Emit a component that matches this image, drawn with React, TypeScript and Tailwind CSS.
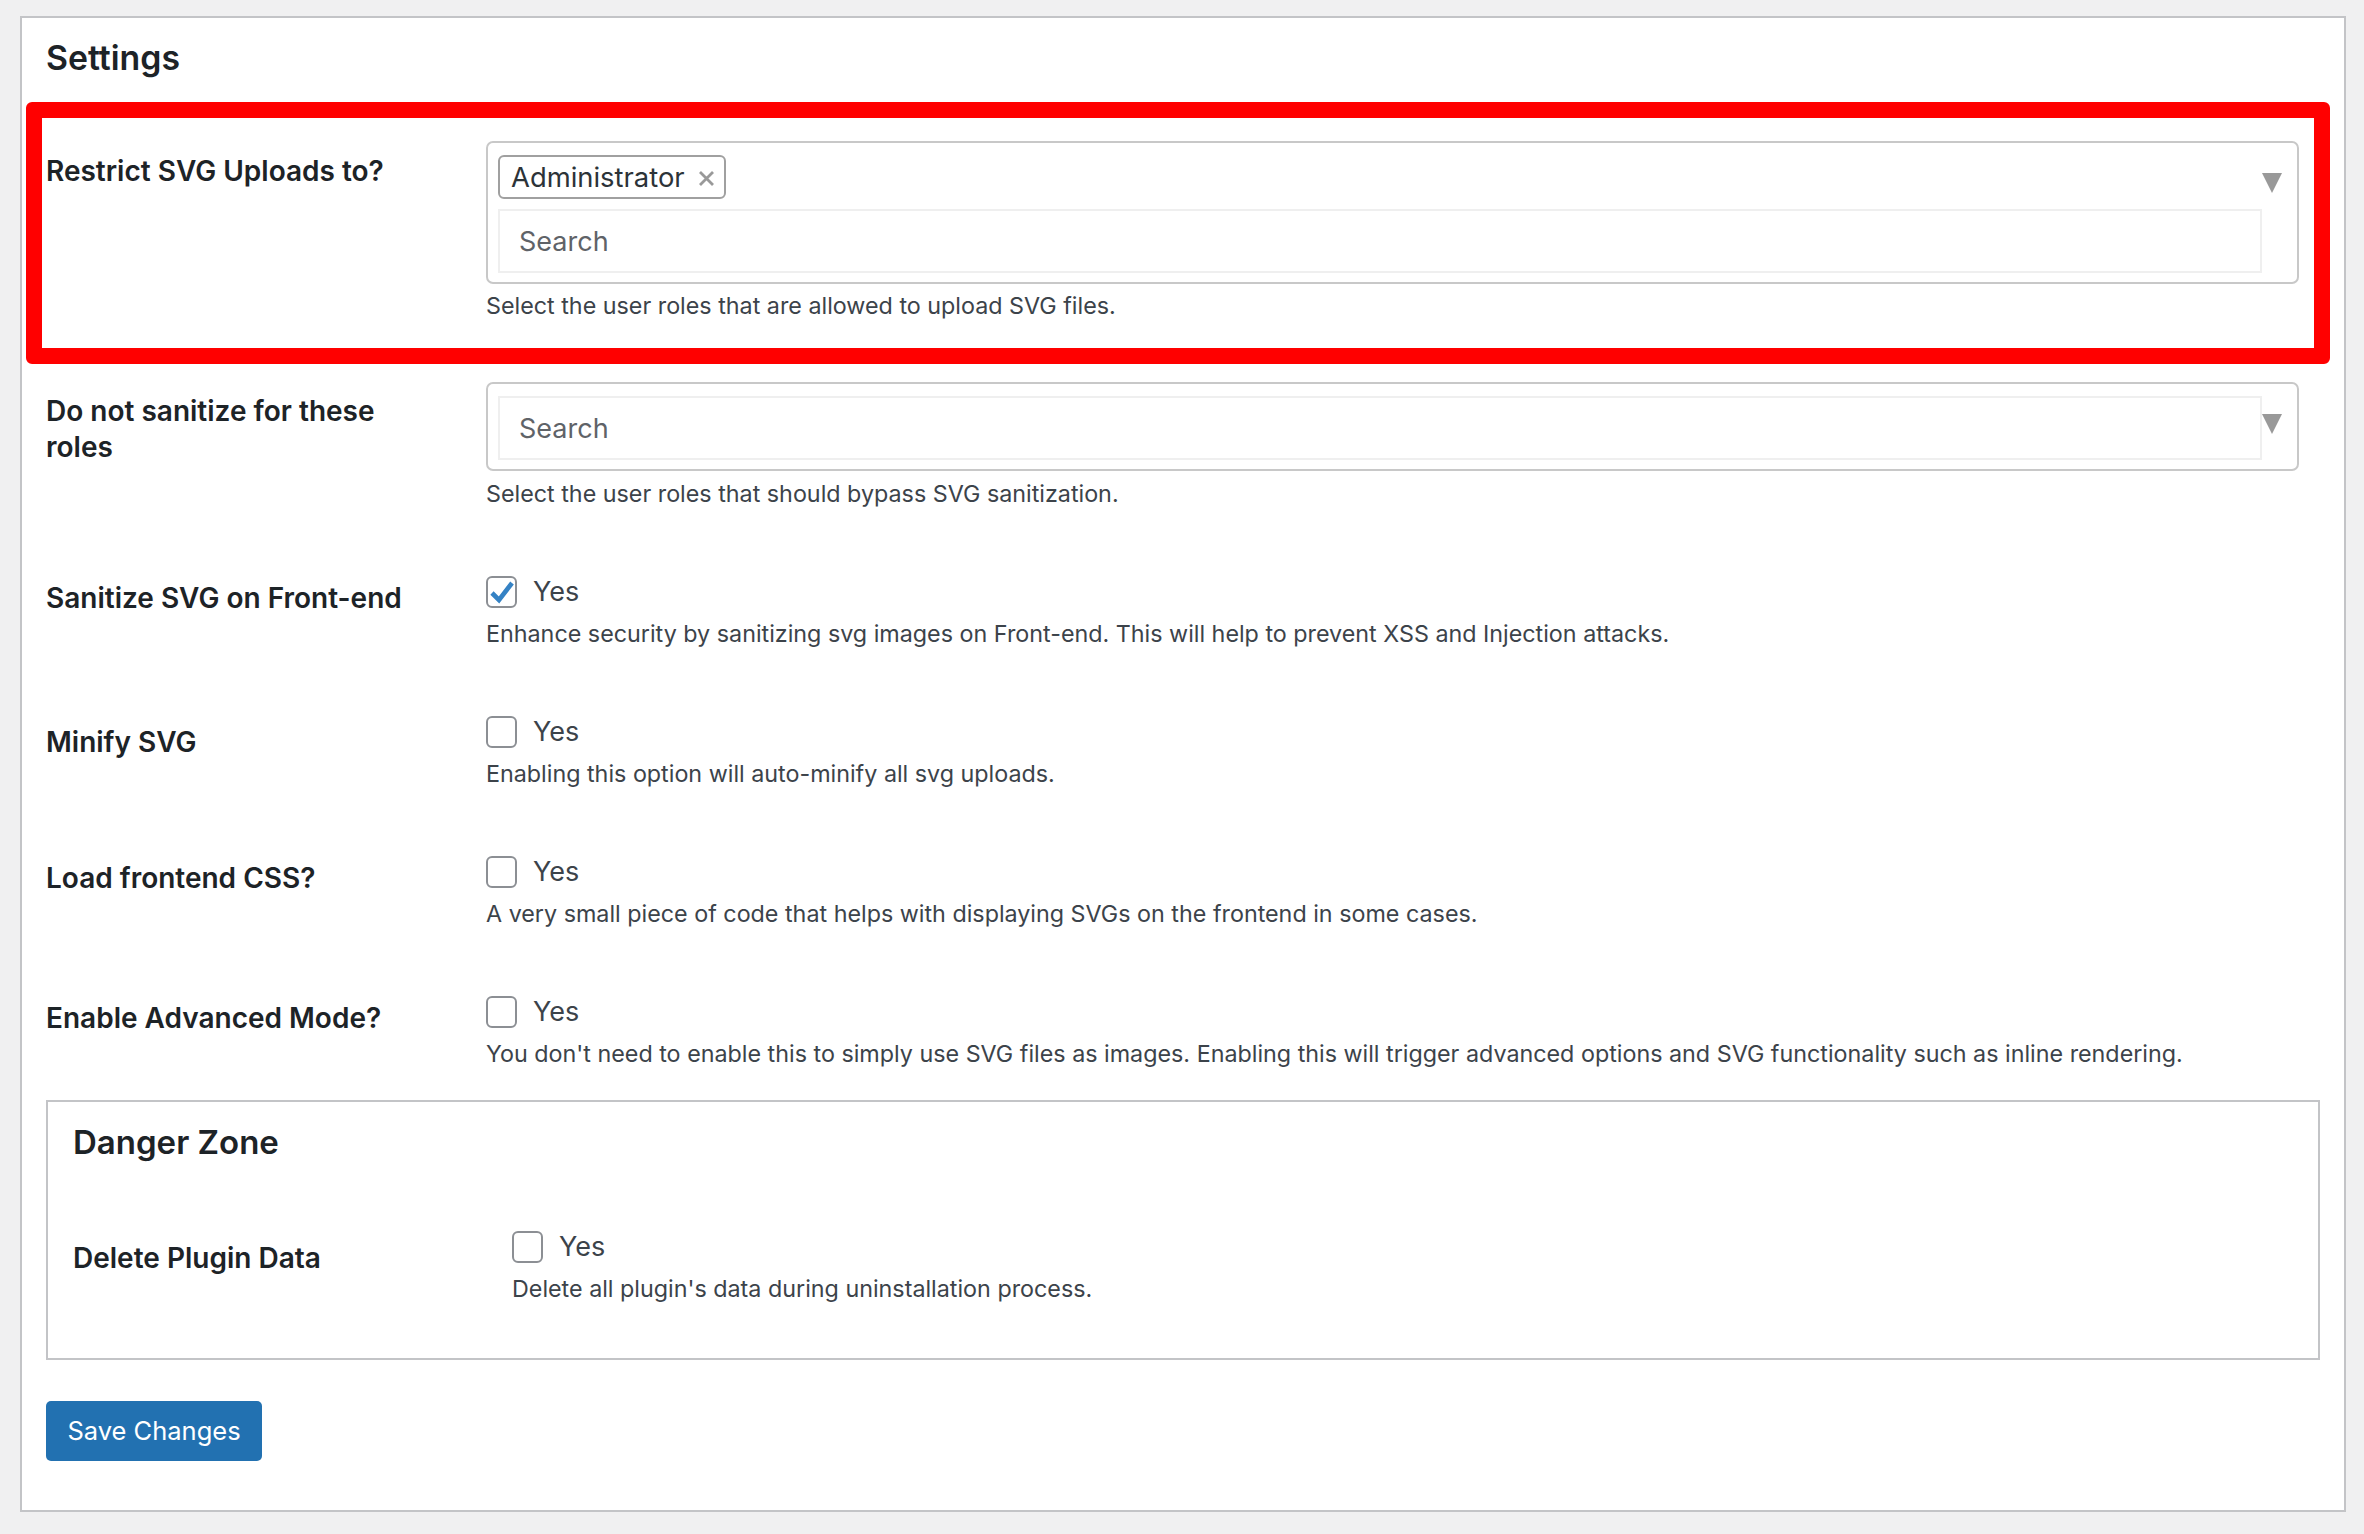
const font = 'font-["Inter","Liberation_Sans",sans-serif]';

function Hint({ children }: { children: React.ReactNode }) {
  return <p className="whitespace-nowrap text-[23.3px] leading-[30px] text-[#3c434a]">{children}</p>;
}

function RoleSearch({ children }: { children?: React.ReactNode }) {
  return (
    <div className="relative rounded-[7px] border-2 border-[#c8c8c8] px-[10px] pt-[12px] pb-[9px]">
      {children}
      <div className="mr-[25px] flex h-[64px] items-center border-2 border-[#efefef] pl-[19px] pt-[2px] text-[27px] text-[#5f6368]">Search</div>
      <svg className="absolute right-[15px] top-[30px] h-[20px] w-[20px]" viewBox="0 0 20 20">
        <path d="M0 0H20L10 20Z" fill="#999" />
      </svg>
    </div>
  );
}

function Check({ label, checked, hint }: { label: string; checked?: boolean; hint: string }) {
  return (
    <div>
      <div className="flex h-[32px] items-center">
        <span className="flex h-[32px] w-[31px] items-center justify-center rounded-[6px] border-2 border-[#8c8f94] bg-white">
          {checked && (
            <svg className="h-[32px] w-[31px] shrink-0" viewBox="0 0 31 32" fill="none">
              <path d="M6 17L13 24L26 7" stroke="#3582c4" strokeWidth="4.6" />
            </svg>
          )}
        </span>
        <span className="ml-[16px] text-[27px] text-[#3c434a]">{label}</span>
      </div>
      <div className="mt-[11px]"><Hint>{hint}</Hint></div>
    </div>
  );
}

function Label({ children, width = 'w-[440px]' }: { children: React.ReactNode; width?: string }) {
  return <div className={`${width} pr-[60px] text-[28px] font-semibold leading-[36px] text-[#1d2327]`}>{children}</div>;
}

const checks = [
  { label: 'Sanitize SVG on Front-end', checked: true, top: 'mt-[67px]', pad: 'pt-[4px]', hint: 'Enhance security by sanitizing svg images on Front-end. This will help to prevent XSS and Injection attacks.' },
  { label: 'Minify SVG', top: 'mt-[67px]', pad: 'pt-[8px]', hint: 'Enabling this option will auto-minify all svg uploads.' },
  { label: 'Load frontend CSS?', top: 'mt-[67px]', pad: 'pt-[4px]', hint: 'A very small piece of code that helps with displaying SVGs on the frontend in some cases.' },
  { label: 'Enable Advanced Mode?', top: 'mt-[67px]', pad: 'pt-[4px]', hint: "You don't need to enable this to simply use SVG files as images. Enabling this will trigger advanced options and SVG functionality such as inline rendering." },
];

export default function App() {
  return (
    <div className={`${font} min-h-[1534px] bg-[#f0f0f1] pl-[20px] pr-[18px] pt-[16px]`}>
      <div className="h-[1496px] border-2 border-[#c3c4c7] bg-white px-[24px]">
        <h2 className="pt-[20px] pb-[1px] text-[33.8px] font-semibold leading-[40px] text-[#1d2327]">Settings</h2>

        {/* red annotation round the first row */}
        <div className="-ml-[20px] -mr-[10px] mt-[23px] flex h-[262px] rounded-[6px] border-[16px] border-[#ff0000] pl-[4px] pr-[15px] pt-[23px]">
          <div className="pt-[12px]"><Label>Restrict SVG Uploads to?</Label></div>
          <div className="min-w-0 flex-1">
            <RoleSearch>
              <div className="mb-[10px] flex h-[44px] w-[228px] items-center justify-between rounded-[6px] border-2 border-[#a0a0a0] pl-[11px] pr-[10px] pt-[2px] text-[27.4px] text-[#2c3338]">
                Administrator
                <svg className="h-[15px] w-[15px]" viewBox="0 0 15 15"><path d="M1 1L14 14M14 1L1 14" stroke="#999" strokeWidth="2.8" /></svg>
              </div>
            </RoleSearch>
            <div className="mt-[7px]"><Hint>Select the user roles that are allowed to upload SVG files.</Hint></div>
          </div>
        </div>

        <div className="mt-[18px] flex pr-[21px]">
          <div className="pt-[11px]"><Label>Do not sanitize for these roles</Label></div>
          <div className="min-w-0 flex-1">
            <RoleSearch />
            <div className="mt-[8px]"><Hint>Select the user roles that should bypass SVG sanitization.</Hint></div>
          </div>
        </div>

        {checks.map(c => (
          <div key={c.label} className={`flex ${c.top}`}>
            <div className={c.pad}><Label>{c.label}</Label></div>
            <Check label="Yes" checked={c.checked} hint={c.hint} />
          </div>
        ))}

        <div className="mt-[31px] h-[260px] border-2 border-[#c3c4c7] px-[25px]">
          <h3 className="pt-[20px] text-[33px] font-semibold leading-[40px] text-[#1d2327]">Danger Zone</h3>
          <div className="mt-[69px] flex">
            <div className="pt-[9px]"><Label width="w-[439px]">Delete Plugin Data</Label></div>
            <Check label="Yes" hint="Delete all plugin's data during uninstallation process." />
          </div>
        </div>

        <button className="mt-[41px] h-[60px] w-[216px] rounded-[5px] bg-[#2271b1] text-[25.5px] text-white">Save Changes</button>
      </div>
    </div>
  );
}
